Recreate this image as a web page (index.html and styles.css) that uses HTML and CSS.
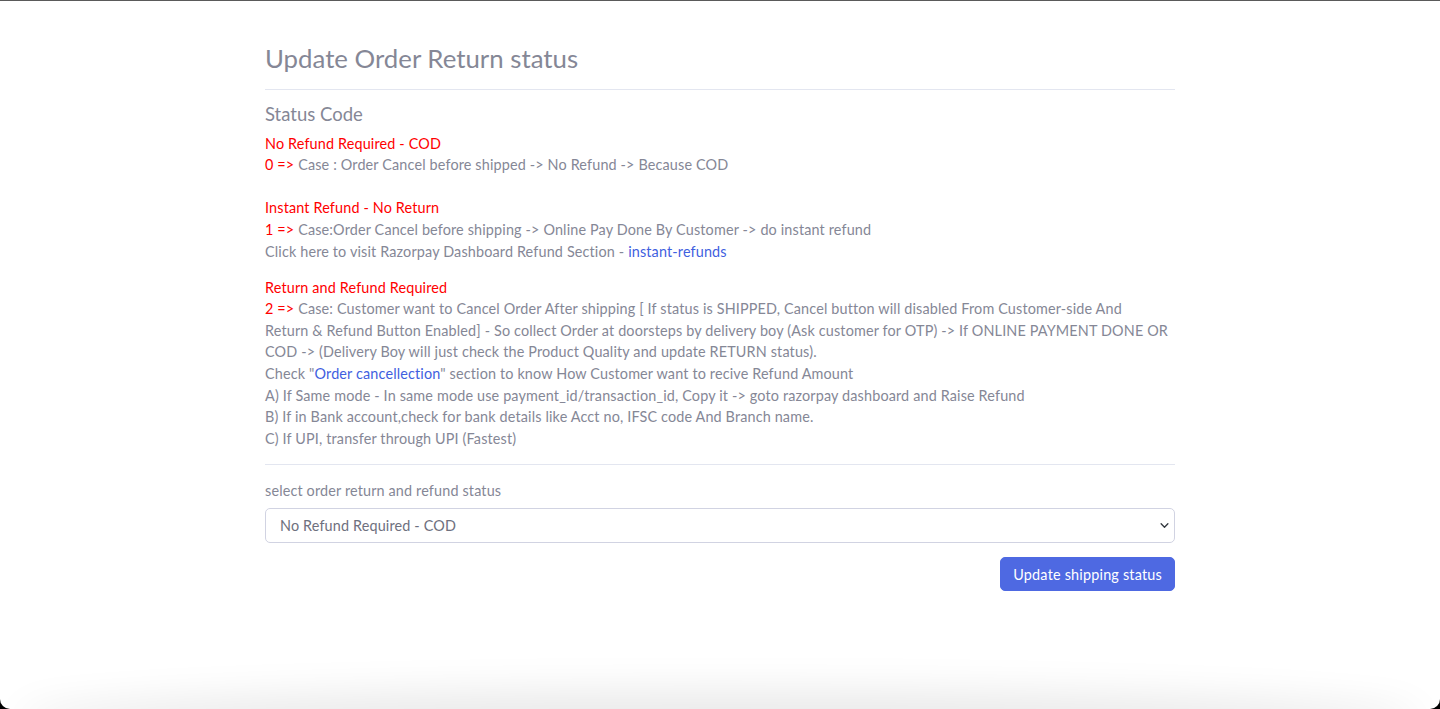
FILE: index.html
```html
<!DOCTYPE html>
<html lang="en">
<head>
<meta charset="utf-8">
<title>Update Order Return status</title>
<link rel="stylesheet" href="styles.css">
</head>
<body>
<div class="window">
  <main class="container">
    <h1 class="page-title">Update Order Return status</h1>
    <hr class="divider">
    <h5 class="section-title">Status Code</h5>
    <p class="block">
      <span class="red">No Refund Required - COD</span><br>
      <span class="red">0 =&gt;</span> Case : Order Cancel before shipped -&gt; No Refund -&gt; Because COD<br>
      <br>
      <span class="red">Instant Refund - No Return</span><br>
      <span class="red">1 =&gt;</span> Case:Order Cancel before shipping -&gt; Online Pay Done By Customer -&gt; do instant refund<br>
      Click here to visit Razorpay Dashboard Refund Section - <a class="link" href="#">instant-refunds</a>
    </p>
    <p class="block">
      <span class="red">Return and Refund Required</span><br>
      <span class="red">2 =&gt;</span> Case: Customer want to Cancel Order After shipping [ If status is SHIPPED, Cancel button will disabled From Customer-side And<br>Return &amp; Refund Button Enabled] - So collect Order at doorsteps by delivery boy (Ask customer for OTP) -&gt; If ONLINE PAYMENT DONE OR<br>COD -&gt; (Delivery Boy will just check the Product Quality and update RETURN status).<br>
      Check "<a class="link" href="#">Order cancellection</a>" section to know How Customer want to recive Refund Amount<br>
      A) If Same mode - In same mode use payment_id/transaction_id, Copy it -&gt; goto razorpay dashboard and Raise Refund<br>
      B) If in Bank account,check for bank details like Acct no, IFSC code And Branch name.<br>
      C) If UPI, transfer through UPI (Fastest)
    </p>
    <hr class="divider">
    <form class="status-form">
      <label class="form-label" for="status">select order return and refund status</label>
      <select class="form-select" id="status">
        <option>No Refund Required - COD</option>
        <option>Instant Refund - No Return</option>
        <option>Return and Refund Required</option>
      </select>
      <div class="actions">
        <button type="button" class="btn-primary">Update shipping status</button>
      </div>
    </form>
  </main>
  <div class="bottom-shade"></div>
</div>
</body>
</html>
```

FILE: styles.css
```css
html {
  background: #000;
}
body {
  margin: 0;
  font-family: "Lato", "Noto Sans", sans-serif;
  font-size: 14.4px;
  line-height: 21.6px;
  letter-spacing: 0.15px;
  color: #858796;
}
.window {
  height: 709px;
  box-sizing: border-box;
  background: #fff;
  border-top: 1px solid #5a5a5a;
  border-radius: 0 0 10px 10px;
  overflow: hidden;
  display: flex;
  flex-direction: column;
}
.container {
  width: 910px;
  margin: 0 auto;
  padding-top: 42px;
}
.page-title {
  margin: 0 0 16px;
  font-size: 25.8px;
  line-height: 30px;
  font-weight: 400;
  letter-spacing: 0;
  color: #858796;
}
.divider {
  margin: 0;
  border: 0;
  border-top: 1px solid #e3e6f0;
}
.page-title + .divider {
  margin-bottom: 14px;
}
.section-title {
  margin: 0 0 7px;
  font-size: 18.5px;
  line-height: 21.6px;
  font-weight: 400;
  letter-spacing: 0;
  color: #858796;
}
.block {
  margin: 0 0 14.4px;
}
.red {
  color: #ff0000;
}
.link {
  color: #3f5fe0;
  text-decoration: none;
}
.status-form {
  padding-top: 15px;
  display: flex;
  flex-direction: column;
}
.form-label {
  margin-bottom: 7px;
}
.form-select {
  appearance: none;
  -webkit-appearance: none;
  height: 35px;
  width: 100%;
  box-sizing: border-box;
  padding: 0 30px 0 14px;
  font-family: inherit;
  font-size: 14.4px;
  letter-spacing: 0.15px;
  color: #6e707e;
  background: #fff url("data:image/svg+xml;utf8,<svg xmlns='http://www.w3.org/2000/svg' width='16' height='16' viewBox='0 0 16 16'><path fill='none' stroke='%23343a40' stroke-linecap='round' stroke-linejoin='round' stroke-width='2.4' d='M2 5l6 6 6-6'/></svg>") no-repeat right 5px center / 9px 9px;
  border: 1px solid #d1d3e2;
  border-radius: 5px;
}
.actions {
  display: flex;
  justify-content: flex-end;
  margin-top: 14px;
}
.btn-primary {
  height: 34px;
  padding: 0 12px;
  font-family: inherit;
  font-size: 14.4px;
  letter-spacing: 0.2px;
  color: #fff;
  background: #4e69e2;
  border: 1px solid #4e69e2;
  border-radius: 5px;
}
.bottom-shade {
  margin: auto 30px -30px;
  height: 30px;
  flex-shrink: 0;
  border-radius: 50%;
  box-shadow: 0 -4px 40px 14px rgba(0, 0, 0, 0.09);
}
```
